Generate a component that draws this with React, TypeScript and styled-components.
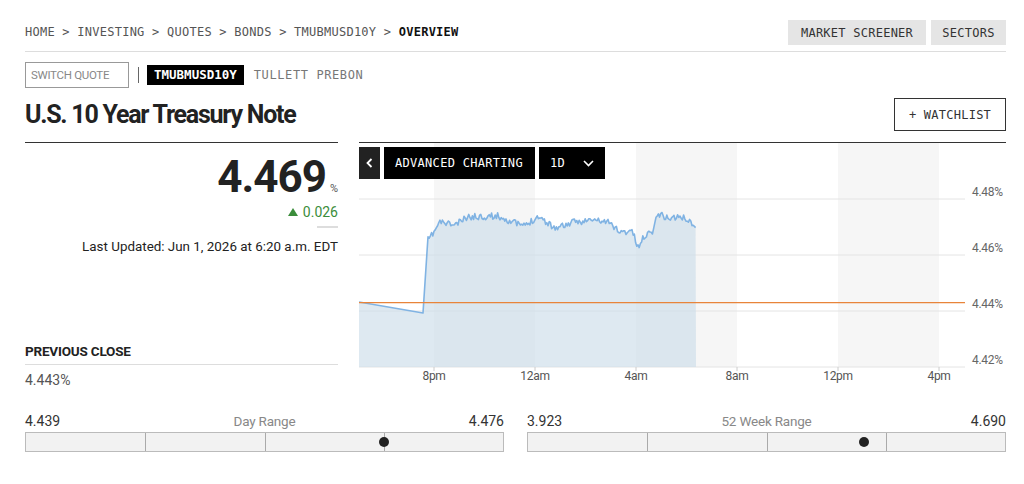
import React from 'react'
import styled, { createGlobalStyle } from 'styled-components'

const MONO = `'DejaVu Sans Mono', 'Liberation Mono', monospace`

const GlobalStyle = createGlobalStyle`
  html, body {
    margin: 0;
    padding: 0;
    background: #fff;
  }
  body {
    font-family: Roboto, 'Liberation Sans', Arial, sans-serif;
    color: #222;
  }
  * {
    box-sizing: border-box;
  }
`

const Page = styled.div`
  width: 981px;
  margin-left: 25px;
  padding-top: 20px;
`

const TopBar = styled.div`
  display: flex;
  align-items: flex-start;
  justify-content: space-between;
  height: 32px;
  border-bottom: 1px solid #ddd;
`

const Crumbs = styled.nav`
  font-family: ${MONO};
  font-size: 12px;
  letter-spacing: 0.25px;
  line-height: 25px;
  color: #555;
`

const Current = styled.span`
  color: #111;
  font-weight: 700;
`

const NavButtons = styled.div`
  display: flex;
  gap: 5px;
`

const GrayButton = styled.button<{ w: number }>`
  width: ${({ w }) => w}px;
  height: 25px;
  padding: 0;
  border: none;
  background: #e5e5e5;
  font-family: ${MONO};
  font-size: 12px;
  letter-spacing: 0.25px;
  color: #333;
  white-space: nowrap;
`

const SwitchRow = styled.div`
  display: flex;
  align-items: center;
  margin-top: 10px;
  height: 26px;
`

const SwitchInput = styled.div`
  width: 104px;
  height: 26px;
  border: 1px solid #999;
  padding: 0 5px;
  display: flex;
  align-items: center;
  font-size: 11.5px;
  letter-spacing: -0.3px;
  color: #888;
`

const Pipe = styled.span`
  width: 1px;
  height: 16px;
  background: #666;
  margin: 0 8px 0 9px;
`

const TickerBadge = styled.span`
  background: #000;
  color: #fff;
  font-family: ${MONO};
  font-weight: 700;
  font-size: 12.5px;
  height: 20px;
  line-height: 20px;
  padding: 0 7px;
`

const Exchange = styled.span`
  font-family: ${MONO};
  font-size: 12px;
  letter-spacing: 0.6px;
  color: #777;
  margin-left: 10px;
`

const TitleRow = styled.div`
  display: flex;
  align-items: center;
  justify-content: space-between;
  margin-top: 10px;
  height: 33px;
`

const Title = styled.h1`
  margin: 0;
  font-size: 25px;
  font-weight: 700;
  letter-spacing: -1.25px;
  color: #222;
`

const OutlineButton = styled.button`
  height: 33px;
  width: 112px;
  border: 1px solid #333;
  background: #fff;
  font-family: ${MONO};
  font-size: 12px;
  letter-spacing: 0.25px;
  color: #333;
`

const Main = styled.section`
  display: flex;
  gap: 21px;
  margin-top: 11px;
  height: 246px;
`

const QuotePanel = styled.div`
  width: 313px;
  border-top: 1px solid #333;
  display: flex;
  flex-direction: column;
`

const PriceRow = styled.div`
  display: flex;
  justify-content: flex-end;
  align-items: baseline;
  margin-top: 12px;
`

const Price = styled.span`
  font-size: 44px;
  line-height: 44px;
  font-weight: 700;
  letter-spacing: -1px;
  color: #222;
`

const Unit = styled.span`
  font-size: 11px;
  color: #555;
  margin-left: 4px;
`

const Change = styled.div`
  align-self: flex-end;
  margin-top: 5px;
  line-height: 16px;
  font-size: 14px;
  color: #3b8d3b;
  display: flex;
  align-items: center;
  gap: 5px;
`

const ShortRule = styled.div`
  align-self: flex-end;
  width: 21px;
  height: 2px;
  background: #ddd;
  margin-top: 6px;
`

const Updated = styled.div`
  align-self: flex-end;
  margin-top: 11px;
  line-height: 16px;
  font-size: 13.4px;
  color: #222;
  white-space: nowrap;
`

const PrevLabel = styled.div`
  margin-top: 88px;
  padding-bottom: 5px;
  border-bottom: 1px solid #ddd;
  line-height: 16px;
  font-size: 13.5px;
  font-weight: 700;
  letter-spacing: -0.2px;
  color: #222;
`

const PrevValue = styled.div`
  margin-top: 7px;
  line-height: 16px;
  font-size: 14px;
  color: #555;
`

const ChartBox = styled.div`
  position: relative;
  width: 647px;
  border-top: 1px solid #333;
`

const ChartTools = styled.div`
  position: absolute;
  top: 4px;
  left: 0;
  display: flex;
  gap: 4px;
`

const ToolButton = styled.button<{ dim?: boolean; w: number }>`
  width: ${({ w }) => w}px;
  height: 32px;
  border: none;
  padding: 0 11px;
  background: ${({ dim }) => (dim ? '#222' : '#000')};
  color: #fff;
  font-family: ${MONO};
  font-size: 12px;
  letter-spacing: 0.3px;
  white-space: nowrap;
  display: flex;
  align-items: center;
  justify-content: space-between;
`

const Ranges = styled.div`
  display: grid;
  grid-template-columns: 479px 479px;
  gap: 23px;
  margin-top: 25px;
`

const RangeHead = styled.div`
  display: grid;
  grid-template-columns: 1fr auto 1fr;
  line-height: 16px;
  font-size: 14px;
`

const RangeEnd = styled.span<{ right?: boolean }>`
  color: #333;
  text-align: ${({ right }) => (right ? 'right' : 'left')};
`

const RangeName = styled.span`
  color: #888;
  font-size: 13.5px;
  letter-spacing: -0.2px;
`

const RangeBar = styled.div`
  position: relative;
  margin-top: 3px;
  height: 20px;
  display: grid;
  grid-template-columns: repeat(4, 1fr);
  border: 1px solid #bbb;
  background: #f2f2f2;
`

const RangeCell = styled.div`
  border-left: 1px solid #aaa;
  &:first-child {
    border-left: none;
  }
`

const Marker = styled.span`
  position: absolute;
  top: 4px;
  width: 10px;
  height: 10px;
  margin-left: -5px;
  border-radius: 50%;
  background: #222;
`

// chart geometry, svg origin sits just under the top rule
const PLOT_W = 606
const AXIS_Y = 224
const yOf = (v: number) => 56 + ((4.48 - v) / 0.02) * 56

const keys: [number, number][] = [
  [69, 97], [73, 92], [81, 79], [96, 82], [109, 74], [139, 73], [156, 80],
  [166, 83], [179, 73], [196, 85], [216, 79], [234, 77], [249, 79], [263, 90],
  [273, 87], [279, 105], [286, 92], [293, 89], [299, 70], [308, 75], [321, 74],
  [328, 76], [337, 85],
]

function buildLine(): [number, number][] {
  let seed = 11
  const rand = () => {
    seed = (seed * 16807) % 2147483647
    return seed / 2147483647
  }
  const pts: [number, number][] = [[0, 159], [64, 170]]
  for (let x = 69; x <= 337; x += 1.2) {
    let i = 0
    while (i < keys.length - 2 && keys[i + 1][0] < x) i++
    const [x0, y0] = keys[i]
    const [x1, y1] = keys[i + 1]
    const t = Math.min(1, Math.max(0, (x - x0) / (x1 - x0)))
    const jitter = x > 333 ? 0 : (rand() - 0.5) * 6.5
    pts.push([x, y0 + (y1 - y0) * t + jitter])
  }
  return pts
}

const linePts = buildLine()
const linePath = linePts.map(([x, y], i) => `${i ? 'L' : 'M'}${x.toFixed(1)},${y.toFixed(1)}`).join(' ')
const areaPath = `M0,${AXIS_Y} ${linePath.replace(/^M/, 'L')} L337,${AXIS_Y} Z`

const yTicks = [4.48, 4.46, 4.44, 4.42]
const xTicks = [
  { x: 75, label: '8pm' },
  { x: 176, label: '12am' },
  { x: 277, label: '4am' },
  { x: 378, label: '8am' },
  { x: 479, label: '12pm' },
  { x: 580, label: '4pm' },
]
const bands = [75, 277, 479]

const Chart = () => (
  <svg width={647} height={245} style={{ display: 'block' }}>
    {bands.map((x) => (
      <rect key={x} x={x} y={0} width={101} height={AXIS_Y} fill="#f6f6f6" />
    ))}
    {yTicks.map((v) => (
      <g key={v}>
        <line x1={0} x2={PLOT_W} y1={yOf(v)} y2={yOf(v)} stroke="#e4e4e4" strokeWidth={1} />
        <text x={613} y={yOf(v) - 3} fontSize={12} fill="#666" fontFamily="Roboto, sans-serif" letterSpacing={-0.3}>
          {v.toFixed(2)}%
        </text>
      </g>
    ))}
    <path d={areaPath} fill="#cddde9" fillOpacity={0.65} />
    <path d={linePath} fill="none" stroke="#80b3e3" strokeWidth={1.6} strokeLinejoin="round" />
    <line x1={0} x2={PLOT_W} y1={yOf(4.443)} y2={yOf(4.443)} stroke="#e8843a" strokeWidth={1.2} />
    {xTicks.map((t) => (
      <g key={t.label}>
        <line x1={t.x} x2={t.x} y1={AXIS_Y} y2={AXIS_Y + 4} stroke="#ccc" />
        <text x={t.x} y={237} textAnchor="middle" fontSize={12} fill="#555" fontFamily="Roboto, sans-serif" letterSpacing={-0.3}>
          {t.label}
        </text>
      </g>
    ))}
  </svg>
)

const Range = ({ low, high, name, pos }: { low: string; high: string; name: string; pos: number }) => (
  <div>
    <RangeHead>
      <RangeEnd>{low}</RangeEnd>
      <RangeName>{name}</RangeName>
      <RangeEnd right>{high}</RangeEnd>
    </RangeHead>
    <RangeBar>
      <RangeCell />
      <RangeCell />
      <RangeCell />
      <RangeCell />
      <Marker style={{ left: `${pos}%` }} />
    </RangeBar>
  </div>
)

export default function App() {
  return (
    <Page>
      <GlobalStyle />
      <TopBar>
        <Crumbs>
          HOME &gt; INVESTING &gt; QUOTES &gt; BONDS &gt; TMUBMUSD10Y &gt; <Current>OVERVIEW</Current>
        </Crumbs>
        <NavButtons>
          <GrayButton w={138}>MARKET SCREENER</GrayButton>
          <GrayButton w={75}>SECTORS</GrayButton>
        </NavButtons>
      </TopBar>

      <SwitchRow>
        <SwitchInput>SWITCH QUOTE</SwitchInput>
        <Pipe />
        <TickerBadge>TMUBMUSD10Y</TickerBadge>
        <Exchange>TULLETT PREBON</Exchange>
      </SwitchRow>

      <TitleRow>
        <Title>U.S. 10 Year Treasury Note</Title>
        <OutlineButton>+ WATCHLIST</OutlineButton>
      </TitleRow>

      <Main>
        <QuotePanel>
          <PriceRow>
            <Price>4.469</Price>
            <Unit>%</Unit>
          </PriceRow>
          <Change>
            <svg width={10} height={8} viewBox="0 0 10 8">
              <path d="M5 0 L10 8 L0 8 Z" fill="#3b8d3b" />
            </svg>
            0.026
          </Change>
          <ShortRule />
          <Updated>Last Updated: Jun 1, 2026 at 6:20 a.m. EDT</Updated>
          <PrevLabel>PREVIOUS CLOSE</PrevLabel>
          <PrevValue>4.443%</PrevValue>
        </QuotePanel>

        <ChartBox>
          <Chart />
          <ChartTools>
            <ToolButton dim w={21} style={{ padding: 0, justifyContent: 'center' }}>
              <svg width={7} height={10} viewBox="0 0 7 10">
                <path d="M5.5 1 L1.5 5 L5.5 9" fill="none" stroke="#fff" strokeWidth={1.8} />
              </svg>
            </ToolButton>
            <ToolButton w={151}>ADVANCED CHARTING</ToolButton>
            <ToolButton w={66}>
              1D
              <svg width={11} height={7} viewBox="0 0 11 7">
                <path d="M1 1 L5.5 5.5 L10 1" fill="none" stroke="#fff" strokeWidth={1.6} />
              </svg>
            </ToolButton>
          </ChartTools>
        </ChartBox>
      </Main>

      <Ranges>
        <Range low="4.439" high="4.476" name="Day Range" pos={75} />
        <Range low="3.923" high="4.690" name="52 Week Range" pos={70.4} />
      </Ranges>
    </Page>
  )
}
